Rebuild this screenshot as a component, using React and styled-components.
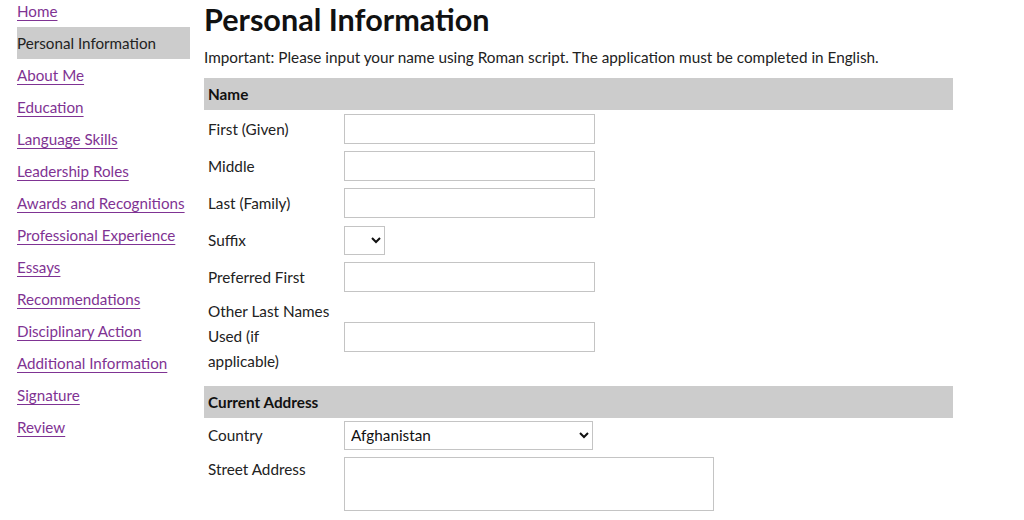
import React from "react";
import styled, { createGlobalStyle } from "styled-components";

const GlobalStyle = createGlobalStyle`
  html, body {
    margin: 0;
    padding: 0;
    background: #fff;
    overflow: hidden;
  }
  body {
    font-family: Lato, "Liberation Sans", sans-serif;
    color: #222;
  }
`;

const Page = styled.div`
  display: flex;
  align-items: flex-start;
  gap: 14px;
  padding-left: 17px;
  width: 1024px;
  height: 520px;
  box-sizing: border-box;
`;

const Sidebar = styled.nav`
  width: 173px;
  flex: none;
  display: flex;
  flex-direction: column;
  margin-top: -5px;
`;

const NavItem = styled.a`
  display: flex;
  align-items: center;
  height: 32px;
  font-size: 15.2px;
  white-space: nowrap;
  color: ${(p) => (p.$active ? "#222" : "#7f3393")};
  background: ${(p) => (p.$active ? "#cccccc" : "transparent")};
  text-decoration: ${(p) => (p.$active ? "none" : "underline")};
  text-underline-offset: 3px;
  cursor: pointer;
`;

const Main = styled.main`
  width: 749px;
  flex: none;
`;

const Title = styled.h1`
  margin: 0;
  padding-top: 1px;
  font-size: 30.6px;
  line-height: 38px;
  font-weight: 700;
  color: #111;
`;

const Intro = styled.p`
  margin: 6px 0 8px;
  font-size: 15.3px;
  line-height: 25px;
`;

const Section = styled.section`
  display: flex;
  flex-direction: column;
  padding-bottom: ${(p) => p.$bottom ?? 12}px;
`;

const SectionHeader = styled.h2`
  margin: 0;
  height: 32px;
  display: flex;
  align-items: center;
  padding-left: 4px;
  background: #cccccc;
  font-size: 15.3px;
  font-weight: 700;
  color: #111;
`;

const Rows = styled.div`
  display: flex;
  flex-direction: column;
  gap: 7px;
  padding-top: ${(p) => p.$top ?? 4}px;
`;

const Row = styled.div`
  display: grid;
  grid-template-columns: 140px 1fr;
  align-items: ${(p) => p.$align || "center"};
  min-height: 30px;
`;

const Label = styled.label`
  padding-left: 4px;
  padding-right: 12px;
  font-size: 15.3px;
  line-height: 25px;
`;

const TextInput = styled.input`
  box-sizing: border-box;
  width: 251px;
  height: 30px;
  margin: 0;
  border: 1px solid #c4c4c4;
  border-radius: 0;
  padding: 0 6px;
  font: inherit;
  font-size: 15.3px;
`;

const Select = styled.select`
  box-sizing: border-box;
  width: ${(p) => p.$width}px;
  height: 29px;
  margin: 0;
  border: 1px solid #c4c4c4;
  border-radius: 0;
  background: #fff;
  padding: 0 2px;
  font-family: inherit;
  font-size: 15.3px;
  color: #111;
`;

const TextArea = styled.textarea`
  box-sizing: border-box;
  width: 370px;
  height: 54px;
  margin: 0;
  border: 1px solid #c4c4c4;
  border-radius: 0;
  resize: none;
  font: inherit;
`;

const navLinks = [
  "Home",
  "Personal Information",
  "About Me",
  "Education",
  "Language Skills",
  "Leadership Roles",
  "Awards and Recognitions",
  "Professional Experience",
  "Essays",
  "Recommendations",
  "Disciplinary Action",
  "Additional Information",
  "Signature",
  "Review",
];

export default function App() {
  return (
    <>
      <GlobalStyle />
      <Page>
        <Sidebar>
          {navLinks.map((item) => (
            <NavItem key={item} $active={item === "Personal Information"}>
              {item}
            </NavItem>
          ))}
        </Sidebar>

        <Main>
          <Title>Personal Information</Title>
          <Intro>
            Important: Please input your name using Roman script. The
            application must be completed in English.
          </Intro>

          <Section>
            <SectionHeader>Name</SectionHeader>
            <Rows>
              <Row>
                <Label>First (Given)</Label>
                <TextInput type="text" />
              </Row>
              <Row>
                <Label>Middle</Label>
                <TextInput type="text" />
              </Row>
              <Row>
                <Label>Last (Family)</Label>
                <TextInput type="text" />
              </Row>
              <Row>
                <Label>Suffix</Label>
                <Select $width={41} defaultValue="">
                  <option value=""></option>
                  <option>Jr.</option>
                  <option>Sr.</option>
                  <option>II</option>
                  <option>III</option>
                </Select>
              </Row>
              <Row>
                <Label>Preferred First</Label>
                <TextInput type="text" />
              </Row>
              <Row>
                <Label>Other Last Names Used (if applicable)</Label>
                <TextInput type="text" />
              </Row>
            </Rows>
          </Section>

          <Section $bottom={0}>
            <SectionHeader>Current Address</SectionHeader>
            <Rows $top={2}>
              <Row>
                <Label>Country</Label>
                <Select $width={249} defaultValue="Afghanistan">
                  <option>Afghanistan</option>
                  <option>Albania</option>
                  <option>Algeria</option>
                </Select>
              </Row>
              <Row $align="start">
                <Label>Street Address</Label>
                <TextArea />
              </Row>
            </Rows>
          </Section>
        </Main>
      </Page>
    </>
  );
}
